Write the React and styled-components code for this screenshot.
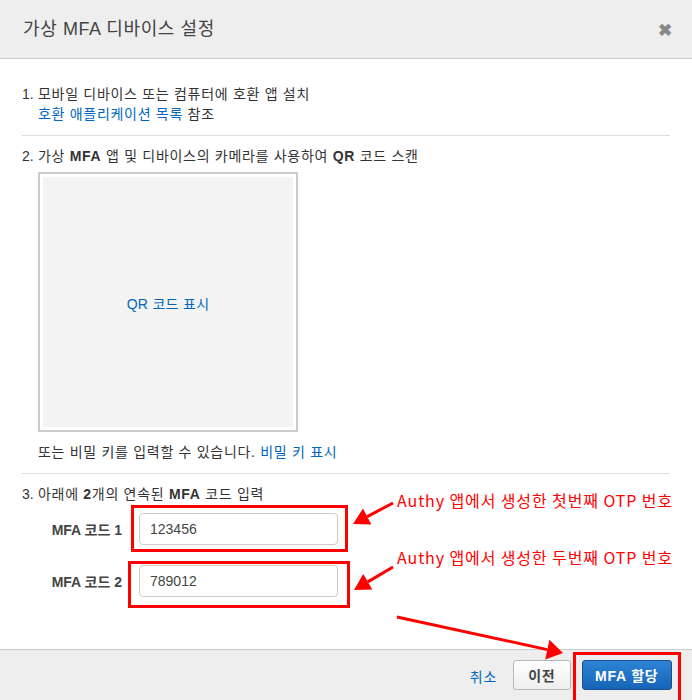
import React from "react"
import styled, { createGlobalStyle } from "styled-components"

const GlobalStyle = createGlobalStyle`
  html, body {
    margin: 0;
    padding: 0;
    background: #fff;
  }
  body {
    font-family: "Liberation Sans", "Noto Sans CJK KR", Arial, sans-serif;
    font-size: 14px;
    color: #333;
  }
`

const Modal = styled.div`
  position: relative;
  width: 692px;
  height: 700px;
  display: flex;
  flex-direction: column;
  overflow: hidden;
  background: #fff;
`

const Header = styled.header`
  height: 58px;
  flex: none;
  display: flex;
  align-items: center;
  justify-content: space-between;
  padding: 0 20px 0 23px;
  background: #eeeeee;
  border-bottom: 1px solid #cccccc;
`

const Title = styled.h1`
  margin: 0;
  font-size: 18px;
  font-weight: 400;
  color: #444;
  padding-bottom: 4px;
  letter-spacing: 0.6px;
`

const Close = styled.span`
  font-size: 17px;
  font-weight: 700;
  color: #888;
  padding-top: 2px;
`

const Body = styled.div`
  flex: 1;
  padding: 25px 22px 0 22px;
  letter-spacing: 0.7px;
`

const Step = styled.section`
  display: flex;
  flex-direction: column;
`

const StepTitle = styled.div`
  display: flex;
  line-height: 20px;
  color: #333;
`

const Num = styled.span`
  width: 16px;
  flex: none;
  letter-spacing: 0;
`

const Indent = styled.div`
  padding-left: 16px;
  line-height: 20px;
  margin-top: ${p => p.$top || 0}px;
`

const Link = styled.a`
  color: #0066c0;
  text-decoration: none;
`

const Divider = styled.hr`
  border: none;
  border-top: 1px solid #dddddd;
  margin: ${p => p.$above}px 0 10px 0;
`

const QrFrame = styled.div`
  width: 250px;
  height: 250px;
  margin: 6px 0 0 16px;
  border: 2px solid #cccccc;
  padding: 3px;
  background: #fff;
`

const QrInner = styled.div`
  width: 100%;
  height: 100%;
  background: #f4f4f4;
  display: flex;
  align-items: center;
  justify-content: center;
  color: #0066c0;
  font-size: 14px;
  letter-spacing: 0.3px;
  padding-top: 1px;
  box-sizing: border-box;
`

const CodeRows = styled.div`
  display: flex;
  flex-direction: column;
  gap: 20px;
  margin-top: 9px;
  padding-left: 16px;
`

const CodeRow = styled.label`
  display: flex;
  align-items: center;
  gap: 17px;
`

const CodeLabel = styled.span`
  width: 84px;
  text-align: right;
  font-weight: 700;
  color: #444;
  letter-spacing: 0;
`

const CodeInput = styled.input`
  width: 199px;
  height: 32px;
  box-sizing: border-box;
  border: 1px solid #cccccc;
  border-radius: 4px;
  padding: 0 10px;
  font-family: inherit;
  font-size: 14px;
  color: #444;
  outline: none;
`

const Footer = styled.footer`
  height: 50px;
  flex: none;
  display: flex;
  align-items: center;
  justify-content: flex-end;
  gap: 11px;
  padding: 0 20px 0 0;
  background: #eeeeee;
  border-top: 1px solid #cccccc;
  letter-spacing: 0.8px;
`

const CancelLink = styled(Link)`
  margin-right: 5px;
  padding-top: 1px;
`

const Button = styled.button`
  height: 30px;
  box-sizing: border-box;
  border-radius: 3px;
  font-family: inherit;
  font-size: 14px;
  font-weight: 700;
  letter-spacing: inherit;
  cursor: pointer;
  padding: 0 ${p => (p.$primary ? 12.5 : 14)}px;
  color: ${p => (p.$primary ? "#fff" : "#444")};
  border: 1px solid ${p => (p.$primary ? "#1b4f8f" : "#b8b8b8")};
  background: ${p =>
    p.$primary
      ? "linear-gradient(#2d83d6, #1565b7)"
      : "linear-gradient(#ffffff, #eeeeee)"};
`

const Overlay = styled.div`
  position: absolute;
  inset: 0;
  pointer-events: none;
`

const RedBox = styled.div`
  position: absolute;
  left: ${p => p.$x}px;
  top: ${p => p.$y}px;
  width: ${p => p.$w}px;
  height: ${p => p.$h}px;
  border: 3px solid #ff0000;
  box-sizing: border-box;
`

const Note = styled.div`
  position: absolute;
  left: ${p => p.$x}px;
  top: ${p => p.$y}px;
  color: #ff0000;
  font-family: "Noto Sans CJK KR", "Noto Sans", sans-serif;
  font-size: 16px;
  line-height: 20px;
  letter-spacing: 0.9px;
  white-space: nowrap;
`

const ArrowLayer = styled.svg`
  position: absolute;
  left: 0;
  top: 0;
`

function Arrow({ x1, y1, x2, y2, head = 16, wide = 9 }) {
  const dx = x2 - x1
  const dy = y2 - y1
  const len = Math.hypot(dx, dy)
  const ux = dx / len
  const uy = dy / len
  const bx = x2 - ux * head
  const by = y2 - uy * head
  const px = -uy * wide
  const py = ux * wide
  return (
    <g>
      <line x1={x1} y1={y1} x2={bx} y2={by} stroke="#ff0000" strokeWidth="3" />
      <polygon
        points={`${x2},${y2} ${bx + px},${by + py} ${bx - px},${by - py}`}
        fill="#ff0000"
      />
    </g>
  )
}

export default function App() {
  return (
    <>
      <GlobalStyle />
      <Modal>
        <Header>
          <Title>가상 MFA 디바이스 설정</Title>
          <Close>✖</Close>
        </Header>
        <Body>
          <Step>
            <StepTitle>
              <Num>1.</Num>
              <span>모바일 디바이스 또는 컴퓨터에 호환 앱 설치</span>
            </StepTitle>
            <Indent>
              <Link href="#">호환 애플리케이션 목록</Link> 참조
            </Indent>
          </Step>
          <Divider $above={11} />
          <Step>
            <StepTitle>
              <Num>2.</Num>
              <span>
                가상 <b>MFA</b> 앱 및 디바이스의 카메라를 사용하여 <b>QR</b> 코드 스캔
              </span>
            </StepTitle>
            <QrFrame>
              <QrInner>QR 코드 표시</QrInner>
            </QrFrame>
            <Indent $top={10}>
              또는 비밀 키를 입력할 수 있습니다. <Link href="#">비밀 키 표시</Link>
            </Indent>
          </Step>
          <Divider $above={11} />
          <Step>
            <StepTitle>
              <Num>3.</Num>
              <span>
                아래에 <b>2</b>개의 연속된 <b>MFA</b> 코드 입력
              </span>
            </StepTitle>
            <CodeRows>
              <CodeRow>
                <CodeLabel>MFA 코드 1</CodeLabel>
                <CodeInput defaultValue="123456" />
              </CodeRow>
              <CodeRow>
                <CodeLabel>MFA 코드 2</CodeLabel>
                <CodeInput defaultValue="789012" />
              </CodeRow>
            </CodeRows>
          </Step>
        </Body>
        <Footer>
          <CancelLink href="#">취소</CancelLink>
          <Button>이전</Button>
          <Button $primary>MFA 할당</Button>
        </Footer>

        <Overlay>
          <RedBox $x={131} $y={505} $w={217} $h={47} />
          <RedBox $x={128} $y={561} $w={222} $h={47} />
          <RedBox $x={573} $y={652} $w={108} $h={52} />
          <Note $x={397} $y={490}>Authy 앱에서 생성한 첫번째 OTP 번호</Note>
          <Note $x={397} $y={547}>Authy 앱에서 생성한 두번째 OTP 번호</Note>
          <ArrowLayer width="692" height="700" viewBox="0 0 692 700">
            <Arrow x1={393} y1={503} x2={353} y2={524} />
            <Arrow x1={393} y1={567} x2={354} y2={590} />
            <Arrow x1={397} y1={617} x2={563} y2={653} head={16} wide={10} />
          </ArrowLayer>
        </Overlay>
      </Modal>
    </>
  )
}
